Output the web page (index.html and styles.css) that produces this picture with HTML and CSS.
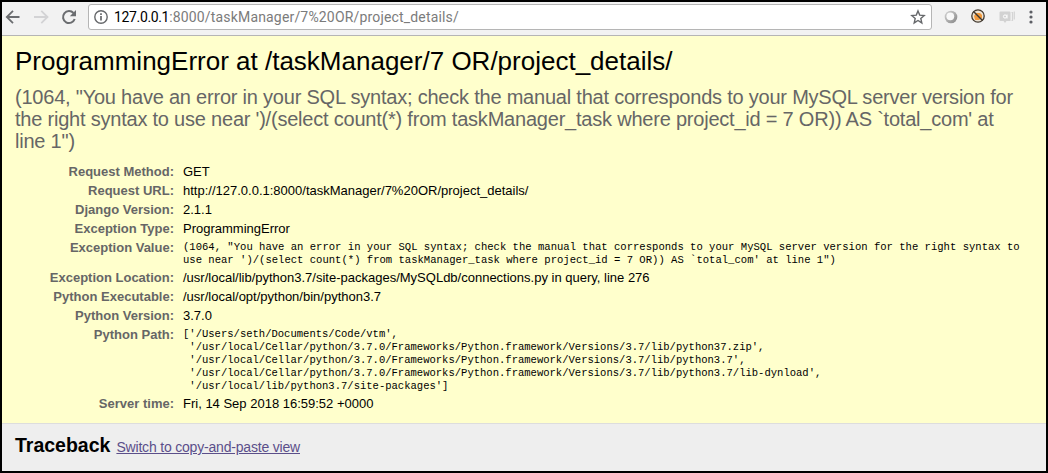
FILE: index.html
```html
<!DOCTYPE html>
<html lang="en">
<head>
<meta charset="utf-8">
<title>ProgrammingError at /taskManager/7 OR/project_details/</title>
<link rel="stylesheet" href="styles.css">
</head>
<body>
<div class="window">
  <header class="toolbar">
    <nav class="nav">
      <svg width="84" height="30" viewBox="0 0 84 30" fill="none" stroke-width="1.8">
        <path d="M17.5 15H5M11 8.8L4.8 15l6.200 6.200" stroke="#6b6d70"/>
        <path d="M32 15h13M39.300 8.800L45.500 15l-6.200 6.200" stroke="#d3d3d5"/>
        <path d="M71.500 11A6 6 0 1 0 72.700 17" stroke="#6b6d70" stroke-width="2"/>
        <path d="M74 8v6.200h-6.200z" fill="#6b6d70"/>
      </svg>
    </nav>
    <div class="address">
      <svg class="info" width="14" height="14" viewBox="0 0 14 14" fill="none">
        <circle cx="7" cy="7" r="6.200" stroke="#66686b" stroke-width="1.400"/>
        <path d="M7 6v4.500M7 3.300v1.700" stroke="#66686b" stroke-width="1.700"/>
      </svg>
      <span class="url"><span class="host">127.0.0.1</span><span class="path">:8000/taskManager/7%20OR/project_details/</span></span>
      <svg class="star" width="16" height="16" viewBox="0 0 16 16" fill="none">
        <path d="M8 1.900l1.700 4.200 4.500.4-3.400 3 1 4.400L8 11.500l-3.800 2.400 1-4.400-3.400-3 4.500-.4z" stroke="#66686b" stroke-width="1.400"/>
      </svg>
    </div>
    <svg class="extensions" width="112" height="30" viewBox="0 0 112 30" fill="none">
      <defs>
        <linearGradient id="ring" x1="0" y1="0" x2="1" y2="1"><stop offset="0" stop-color="#d6d6d6"/><stop offset="1" stop-color="#858585"/></linearGradient>
      </defs>
      <circle cx="19" cy="15" r="6.300" fill="url(#ring)"/>
      <circle cx="18.300" cy="14.300" r="3.900" fill="#f8f8f8"/>
      <circle cx="46" cy="14" r="6.200" fill="#eee3d2" stroke="#40382f" stroke-width="1.300"/>
      <path d="M42 14l2-3h4l2 2v3l-3 2h-4z" fill="#f29a3c"/>
      <path d="M41.500 9.500l9 9" stroke="#40382f" stroke-width="1.400"/>
      <path d="M67.500 10.500q0-1 1-1h9q1 0 1 1v8.500h-4l-1.500 2-1.500-2h-3q-1 0-1-1z" fill="#d2d2d2"/>
      <path d="M79.500 10.500h1v8h-1M82.300 9.500v8" stroke="#d4d4d4" stroke-width="1.200"/>
      <circle cx="73" cy="14.500" r="1.600" stroke="#fff"/>
      <path d="M75 12.500v4" stroke="#fff"/>
      <g fill="#5d5f65"><circle cx="99" cy="10" r="1.600"/><circle cx="99" cy="15" r="1.600"/><circle cx="99" cy="20" r="1.600"/></g>
    </svg>
  </header>
  <main class="summary">
    <h1 class="title">ProgrammingError at /taskManager/7 OR/project_details/</h1>
    <div class="message">
      <div>(1064, "You have an error in your SQL syntax; check the manual that corresponds to your MySQL server version for</div>
      <div>the right syntax to use near ')/(select count(*) from taskManager_task where project_id = 7 OR)) AS `total_com' at</div>
      <div>line 1")</div>
    </div>
    <dl class="meta">
      <dt>Request Method:</dt><dd>GET</dd>
      <dt>Request URL:</dt><dd>http://127.0.0.1:8000/taskManager/7%20OR/project_details/</dd>
      <dt>Django Version:</dt><dd>2.1.1</dd>
      <dt>Exception Type:</dt><dd>ProgrammingError</dd>
      <dt>Exception Value:</dt><dd class="code wide">(1064, "You have an error in your SQL syntax; check the manual that corresponds to your MySQL server version for the right syntax to
use near ')/(select count(*) from taskManager_task where project_id = 7 OR)) AS `total_com' at line 1")</dd>
      <dt>Exception Location:</dt><dd>/usr/local/lib/python3.7/site-packages/MySQLdb/connections.py in query, line 276</dd>
      <dt>Python Executable:</dt><dd>/usr/local/opt/python/bin/python3.7</dd>
      <dt>Python Version:</dt><dd>3.7.0</dd>
      <dt>Python Path:</dt><dd class="code">['/Users/seth/Documents/Code/vtm',
 '/usr/local/Cellar/python/3.7.0/Frameworks/Python.framework/Versions/3.7/lib/python37.zip',
 '/usr/local/Cellar/python/3.7.0/Frameworks/Python.framework/Versions/3.7/lib/python3.7',
 '/usr/local/Cellar/python/3.7.0/Frameworks/Python.framework/Versions/3.7/lib/python3.7/lib-dynload',
 '/usr/local/lib/python3.7/site-packages']</dd>
      <dt>Server time:</dt><dd>Fri, 14 Sep 2018 16:59:52 +0000</dd>
    </dl>
  </main>
  <section class="traceback">
    <h2>Traceback</h2>
    <a href="#">Switch to copy-and-paste view</a>
  </section>
</div>
</body>
</html>
```
FILE: styles.css
```css
* { box-sizing: border-box; margin: 0; padding: 0; }
body { font-family: "Liberation Sans", Arial, sans-serif; color: #000; }
.window { width: 1048px; height: 473px; border: 2px solid #000; display: flex; flex-direction: column; overflow: hidden; background: #eee; }
.toolbar { height: 34px; flex: none; display: flex; background: #f2f2f2; border-bottom: 1px solid #b5b5b5; padding-top: 2px; white-space: nowrap; }
.nav { width: 86px; margin-top: -2px; }
.nav svg, .extensions { display: block; }
.extensions { margin-top: -2px; }
.address { width: 844px; height: 26px; border: 1px solid #b5b5b5; border-radius: 3px; background: #fff; display: flex; align-items: center; padding: 0 5px; }
.info { margin-right: 6px; }
.url { font-family: Roboto, sans-serif; font-size: 14px; line-height: 24px; flex: 1; }
.host { letter-spacing: -0.35px; }
.path { color: #7b7b7b; letter-spacing: 0.17px; }
.summary { height: 388px; flex: none; background: #ffffcc; border-bottom: 1px solid #ddd; padding: 9px 13px 0; white-space: nowrap; }
.title { font-size: 26px; font-weight: 400; line-height: 32px; }
.message { margin-top: 9px; height: 66px; font-size: 20px; line-height: 22px; color: #666; letter-spacing: -0.215px; }
.meta { margin-top: 10px; display: grid; grid-template-columns: 159px 1fr; column-gap: 9px; grid-template-rows: 19px 19px 19px 19px 30px 19px 19px 19px 69px 19px; font-size: 13px; line-height: 19px; }
.meta dt { color: #666; font-weight: 700; text-align: right; }
.meta .code { font-family: "Liberation Mono", monospace; font-size: 10.540px; line-height: 13px; padding-top: 3px; white-space: pre; }
.meta .wide { font-size: 10.570px; }
.traceback { display: flex; align-items: baseline; gap: 6px; padding: 8px 13px; white-space: nowrap; }
.traceback h2 { font-size: 19.500px; line-height: 26px; }
.traceback a { font-size: 14px; letter-spacing: -0.19px; color: #5b4f8a; }
```
